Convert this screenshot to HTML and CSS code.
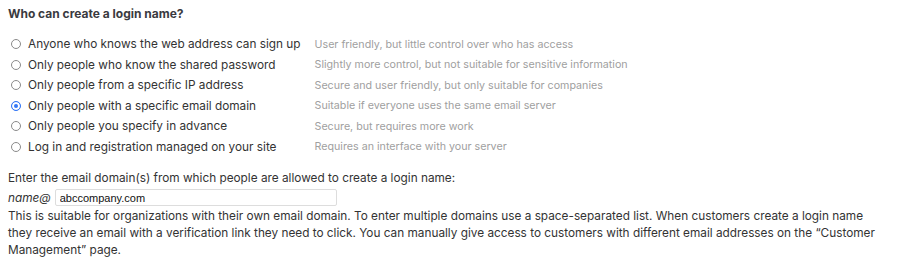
FILE: index.html
```html
<!DOCTYPE html>
<html lang="en">
<head>
<meta charset="utf-8">
<title>Who can create a login name?</title>
<link rel="stylesheet" href="styles.css">
</head>
<body>
<div class="page">
  <h3 class="title">Who can create a login name?</h3>
  <div class="options">
    <label class="opt"><input type="radio" name="who" class="radio"><span>Anyone who knows the web address can sign up</span></label>
    <span class="desc">User friendly, but little control over who has access</span>
    <label class="opt"><input type="radio" name="who" class="radio"><span>Only people who know the shared password</span></label>
    <span class="desc">Slightly more control, but not suitable for sensitive information</span>
    <label class="opt"><input type="radio" name="who" class="radio"><span>Only people from a specific IP address</span></label>
    <span class="desc">Secure and user friendly, but only suitable for companies</span>
    <label class="opt"><input type="radio" name="who" class="radio" checked><span>Only people with a specific email domain</span></label>
    <span class="desc">Suitable if everyone uses the same email server</span>
    <label class="opt"><input type="radio" name="who" class="radio"><span>Only people you specify in advance</span></label>
    <span class="desc">Secure, but requires more work</span>
    <label class="opt"><input type="radio" name="who" class="radio"><span>Log in and registration managed on your site</span></label>
    <span class="desc">Requires an interface with your server</span>
  </div>
  <div class="domain">
    <div class="domain-label">Enter the email domain(s) from which people are allowed to create a login name:</div>
    <div class="domain-row"><span class="prefix">name@</span><input class="domain-input" type="text" value="abccompany.com"></div>
    <p class="help">This is suitable for organizations with their own email domain. To enter multiple domains use a space-separated list. When customers create a login name they receive an email with a verification link they need to click. You can manually give access to customers with different email addresses on the “Customer Management” page.</p>
  </div>
</div>
</body>
</html>
```
FILE: styles.css
```css
html, body {
  margin: 0;
  padding: 0;
  background: #fff;
}
body {
  font-family: Inter, "Noto Sans", "Liberation Sans", sans-serif;
  color: #333;
  font-size: 11.8px;
}
.page {
  padding: 5px 8px 0 8px;
}
.title {
  margin: 0 0 11px 0;
  font-size: 12px;
  font-weight: 700;
  line-height: 18px;
  color: #3a3a40;
}
.options {
  display: grid;
  grid-template-columns: auto 1fr;
  column-gap: 14px;
  row-gap: 0;
  align-items: center;
}
.opt {
  display: flex;
  align-items: center;
  gap: 7px;
  height: 20.5px;
  line-height: 20px;
  white-space: nowrap;
}
.radio {
  -webkit-appearance: none;
  appearance: none;
  margin: 0 0 0 3px;
  width: 10px;
  height: 10px;
  border-radius: 50%;
  border: 1px solid #8a8a8a;
  background: #fff;
  flex: none;
}
.radio:checked {
  border-color: #3478f6;
  background: #3478f6;
  box-shadow: inset 0 0 0 2px #fff;
}
.desc {
  font-size: 10.7px;
  color: #a0a0a0;
  white-space: nowrap;
}
.domain {
  margin-top: 13px;
}
.domain-label {
  line-height: 17px;
}
.domain-row {
  display: flex;
  align-items: center;
  gap: 4px;
  height: 21px;
}
.prefix {
  font-style: italic;
}
.domain-input {
  width: 282px;
  height: 17px;
  box-sizing: border-box;
  border: 1px solid #ddd;
  border-radius: 2px;
  padding: 0 4px;
  font-family: "Liberation Sans", Arial, sans-serif;
  font-size: 11px;
  color: #111;
  margin: 0;
}
.help {
  margin: 0;
  max-width: 870px;
  line-height: 17px;
}
```
